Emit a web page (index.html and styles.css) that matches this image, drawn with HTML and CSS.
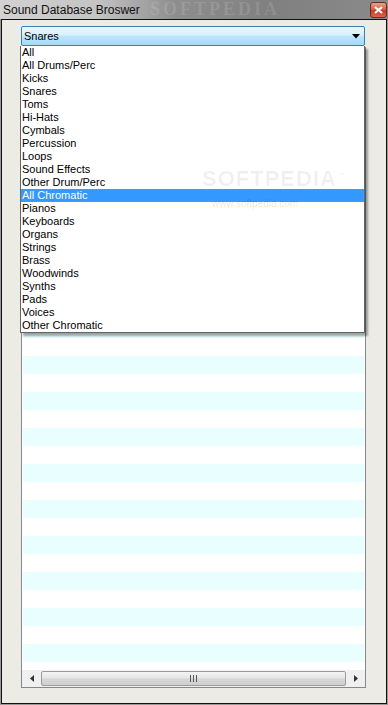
FILE: index.html
```html
<!DOCTYPE html>
<html>
<head>
<meta charset="utf-8">
<link rel="stylesheet" href="styles.css">
</head>
<body>
<div class="window">
  <div class="titlebar">
    <span class="title">Sound Database Broswer</span>
    <span class="wm-title">SOFTPEDIA</span>
    <span class="close">
      <svg width="9" height="8" viewBox="0 0 9 8"><path d="M1 1 L8 7 M8 1 L1 7" stroke="#fff" stroke-width="2.2"/></svg>
    </span>
  </div>
  <div class="frame">
    <div class="combo">
      <span class="combo-text">Snares</span>
      <svg class="combo-arrow" width="8" height="5" viewBox="0 0 8 5"><path d="M0 0 H8 L4 4.5 Z" fill="#000"/></svg>
    </div>
    <div class="listbox">
      <div class="rows"></div>
      <div class="hscroll">
        <div class="sbtn">
          <svg width="4" height="7" viewBox="0 0 4 7"><path d="M4 0 V7 L0 3.5 Z" fill="#333"/></svg>
        </div>
        <div class="thumb">
          <svg width="7" height="7" viewBox="0 0 7 7"><path d="M0.5 0 V7 M3.5 0 V7 M6.5 0 V7" stroke="#555" stroke-width="1"/></svg>
        </div>
        <div class="sbtn">
          <svg width="4" height="7" viewBox="0 0 4 7"><path d="M0 0 V7 L4 3.5 Z" fill="#333"/></svg>
        </div>
      </div>
    </div>
    <ul class="dropdown">
      <li>All</li>
      <li>All Drums/Perc</li>
      <li>Kicks</li>
      <li>Snares</li>
      <li>Toms</li>
      <li>Hi-Hats</li>
      <li>Cymbals</li>
      <li>Percussion</li>
      <li>Loops</li>
      <li>Sound Effects</li>
      <li>Other Drum/Perc</li>
      <li class="sel">All Chromatic</li>
      <li>Pianos</li>
      <li>Keyboards</li>
      <li>Organs</li>
      <li>Strings</li>
      <li>Brass</li>
      <li>Woodwinds</li>
      <li>Synths</li>
      <li>Pads</li>
      <li>Voices</li>
      <li>Other Chromatic</li>
    </ul>
    <div class="wm-list">SOFTPEDIA<sup>™</sup></div>
    <div class="wm-url">www.softpedia.com</div>
  </div>
</div>
</body>
</html>
```

FILE: styles.css
```css
* { box-sizing: border-box; }
html, body { margin: 0; padding: 0; }
body {
  width: 388px;
  height: 705px;
  overflow: hidden;
  background: #9a9a9a;
  font-family: "Liberation Sans", Arial, sans-serif;
}
.window {
  width: 388px;
  height: 705px;
  display: flex;
  flex-direction: column;
  position: relative;
}
.titlebar {
  height: 19px;
  display: flex;
  align-items: center;
  justify-content: space-between;
  padding-left: 3px;
  position: relative;
  overflow: hidden;
  background: linear-gradient(90deg, #d2d2d2 0%, #c4c4c4 25%, #8e8e8e 45%, #808080 70%, #8a8a8a 100%);
}
.title {
  font-size: 12px;
  color: #111;
  position: relative;
  z-index: 1;
}
.wm-title {
  position: absolute;
  left: 150px;
  top: 0;
  line-height: 19px;
  font-family: "Liberation Serif", serif;
  font-weight: bold;
  font-size: 18px;
  letter-spacing: 3px;
  color: rgba(255,255,255,0.12);
}
.close {
  width: 17px;
  height: 16px;
  margin-right: 1px;
  border: 1px solid #6b2b20;
  border-radius: 3px;
  background: linear-gradient(#e8a28e 0%, #d3634a 45%, #c33f24 55%, #d9654a 100%);
  display: flex;
  align-items: center;
  justify-content: center;
  position: relative;
  z-index: 1;
}
.frame {
  flex: 1;
  margin-left: 1px;
  margin-right: 1px;
  margin-bottom: 1px;
  border: 1px solid #111;
  background: #ecebe4;
  padding: 6px 20px 15px 18px;
  display: flex;
  flex-direction: column;
  position: relative;
}
.combo {
  height: 20px;
  width: 344px;
  margin-left: 1px;
  border: 1px solid #3c7fb1;
  border-radius: 2px;
  background: linear-gradient(#eaf6fd 0%, #d9f0fc 45%, #bee6fd 50%, #a7d9f5 100%);
  display: flex;
  align-items: center;
  justify-content: space-between;
  padding: 0 4px 0 2px;
  font-size: 11px;
  color: #000;
}
.listbox {
  margin-top: 1px;
  margin-left: 1px;
  width: 345px;
  flex: 1;
  border: 1px solid #828790;
  background: #fff;
  display: flex;
  flex-direction: column;
}
.rows {
  flex: 1;
  background-image: repeating-linear-gradient(#fff 0px, #fff 18px, #e9fefe 18px, #e9fefe 36px);
  background-position: 0 2px;
  margin: 0 1px 0 1px;
}
.hscroll {
  height: 17px;
  background: #f0f0f0;
  display: flex;
  align-items: center;
  padding: 0 1px;
}
.sbtn {
  width: 17px;
  height: 17px;
  display: flex;
  align-items: center;
  justify-content: center;
}
.thumb {
  flex: 1;
  height: 15px;
  margin: 0 1px;
  border: 1px solid #9b9b9b;
  border-radius: 2px;
  background: linear-gradient(#f4f4f4 0%, #e6e6e6 45%, #d6d6d6 55%, #cfcfcf 100%);
  display: flex;
  align-items: center;
  justify-content: center;
}
.dropdown {
  position: absolute;
  left: 18px;
  top: 26px;
  width: 345px;
  height: 287px;
  margin: 0;
  padding: 0;
  list-style: none;
  background: #fff;
  border: 1px solid #646464;
  border-top: 0;
  box-shadow: 3px 3px 2px rgba(0,0,0,0.35);
  font-size: 11px;
  color: #000;
  z-index: 2;
}
.dropdown li {
  height: 13px;
  line-height: 13px;
  padding-left: 1px;
  white-space: nowrap;
}
.dropdown li.sel {
  background: #3399ff;
  color: #fff;
  outline: 1px dotted #e07a1f;
  outline-offset: -1px;
}
.wm-list {
  position: absolute;
  left: 200px;
  top: 146px;
  font-size: 22px;
  font-weight: bold;
  letter-spacing: 1px;
  color: rgba(0,0,0,0.06);
  z-index: 3;
}
.wm-list sup { font-size: 8px; }
.wm-url {
  position: absolute;
  left: 210px;
  top: 178px;
  font-size: 10px;
  color: rgba(0,0,0,0.12);
  z-index: 3;
}
```
